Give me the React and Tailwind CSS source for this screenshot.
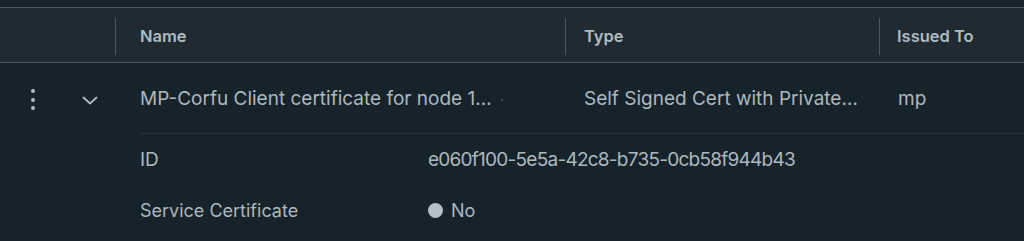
import React from 'react';

const font = { fontFamily: 'Inter, "Noto Sans", sans-serif' };

const App = () => {
    return (
        <div className="w-[1024px] h-[241px] bg-[#17232a] text-[#acb8bf] overflow-hidden" style={font}>
            <div className="h-[7px] bg-[#18252c]" />
            <div className="flex h-[56px] pt-[3px] bg-[#1f2a32] border-t border-b border-[#4a5962] text-[16.5px] font-semibold text-[#aebbc3]">
                <div className="w-[116px] flex items-center justify-end">
                    <div className="w-px h-[37px] bg-[#4a5962]" />
                </div>
                <div className="w-[450px] flex items-center justify-between pl-6">
                    <span>Name</span>
                    <div className="w-px h-[37px] bg-[#4a5962]" />
                </div>
                <div className="w-[314px] flex items-center justify-between pl-[18px]">
                    <span>Type</span>
                    <div className="w-px h-[37px] bg-[#4a5962]" />
                </div>
                <div className="flex-1 flex items-center pl-[17px]">
                    <span>Issued To</span>
                </div>
            </div>

            <div className="flex h-[70px] pt-[3px] items-center text-[19px]">
                <div className="w-[66px] flex justify-center">
                    <div className="flex flex-col gap-[4.5px] items-center">
                        <span className="w-[4px] h-[4px] rounded-full bg-[#aebbc3]" />
                        <span className="w-[4px] h-[4px] rounded-full bg-[#aebbc3]" />
                        <span className="w-[4px] h-[4px] rounded-full bg-[#aebbc3]" />
                    </div>
                </div>
                <div className="w-[50px] flex justify-start pl-[14px]">
                    <svg width="20" height="20" viewBox="0 0 20 20" fill="none" stroke="#aebbc3" strokeWidth="1.8" strokeLinecap="round" strokeLinejoin="round">
                        <path d="M3.5 7.5 L10 13.5 L16.5 7.5" />
                    </svg>
                </div>
                <div className="w-[450px] flex items-center pl-6">
                    <span className="whitespace-nowrap">MP-Corfu Client certificate for node 1…</span>
                    <span className="ml-[9px] w-[2px] h-[2px] bg-[#3a4a52]" />
                </div>
                <div className="w-[314px] pl-[18px] whitespace-nowrap">Self Signed Cert with Private…</div>
                <div className="flex-1 pl-[18px]">mp</div>
            </div>

            <div className="ml-[140px] border-t border-[#26343c] text-[19px]">
                <div className="flex h-[50px] pt-[2px] items-center">
                    <div className="w-[288px]">ID</div>
                    <div className="tracking-[-0.75px]">e060f100-5e5a-42c8-b735-0cb58f944b43</div>
                </div>
                <div className="flex h-[52px] items-center">
                    <div className="w-[288px] text-[18px]">Service Certificate</div>
                    <div className="flex items-center gap-[8px]">
                        <span className="w-[15px] h-[15px] rounded-full bg-[#b4c0c7]" />
                        <span className="text-[18px]">No</span>
                    </div>
                </div>
            </div>
        </div>
    );
};

export default App;
